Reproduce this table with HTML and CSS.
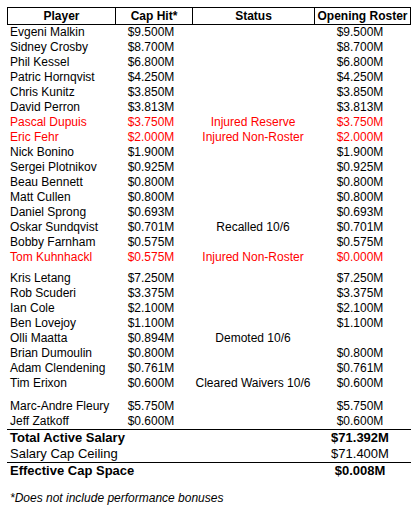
FILE: index.html
```html
<!DOCTYPE html>
<html>
<head>
<meta charset="utf-8">
<link rel="stylesheet" href="styles.css">
</head>
<body>
<div class="sheet">
  <div class="head">
    <div class="hc">Player</div>
    <div class="hc sep">Cap Hit*</div>
    <div class="hc sep">Status</div>
    <div class="hc sep">Opening Roster</div>
  </div>

  <div class="row"><div class="name">Evgeni Malkin</div><div class="val">$9.500M</div><div class="st"></div><div class="val">$9.500M</div></div>
  <div class="row"><div class="name">Sidney Crosby</div><div class="val">$8.700M</div><div class="st"></div><div class="val">$8.700M</div></div>
  <div class="row"><div class="name">Phil Kessel</div><div class="val">$6.800M</div><div class="st"></div><div class="val">$6.800M</div></div>
  <div class="row"><div class="name">Patric Hornqvist</div><div class="val">$4.250M</div><div class="st"></div><div class="val">$4.250M</div></div>
  <div class="row"><div class="name">Chris Kunitz</div><div class="val">$3.850M</div><div class="st"></div><div class="val">$3.850M</div></div>
  <div class="row"><div class="name">David Perron</div><div class="val">$3.813M</div><div class="st"></div><div class="val">$3.813M</div></div>
  <div class="row red"><div class="name">Pascal Dupuis</div><div class="val">$3.750M</div><div class="st">Injured Reserve</div><div class="val">$3.750M</div></div>
  <div class="row red"><div class="name">Eric Fehr</div><div class="val">$2.000M</div><div class="st">Injured Non-Roster</div><div class="val">$2.000M</div></div>
  <div class="row"><div class="name">Nick Bonino</div><div class="val">$1.900M</div><div class="st"></div><div class="val">$1.900M</div></div>
  <div class="row"><div class="name">Sergei Plotnikov</div><div class="val">$0.925M</div><div class="st"></div><div class="val">$0.925M</div></div>
  <div class="row"><div class="name">Beau Bennett</div><div class="val">$0.800M</div><div class="st"></div><div class="val">$0.800M</div></div>
  <div class="row"><div class="name">Matt Cullen</div><div class="val">$0.800M</div><div class="st"></div><div class="val">$0.800M</div></div>
  <div class="row"><div class="name">Daniel Sprong</div><div class="val">$0.693M</div><div class="st"></div><div class="val">$0.693M</div></div>
  <div class="row"><div class="name">Oskar Sundqvist</div><div class="val">$0.701M</div><div class="st">Recalled 10/6</div><div class="val">$0.701M</div></div>
  <div class="row"><div class="name">Bobby Farnham</div><div class="val">$0.575M</div><div class="st"></div><div class="val">$0.575M</div></div>
  <div class="row red"><div class="name">Tom Kuhnhackl</div><div class="val">$0.575M</div><div class="st">Injured Non-Roster</div><div class="val">$0.000M</div></div>

  <div class="gap"></div>

  <div class="row"><div class="name">Kris Letang</div><div class="val">$7.250M</div><div class="st"></div><div class="val">$7.250M</div></div>
  <div class="row"><div class="name">Rob Scuderi</div><div class="val">$3.375M</div><div class="st"></div><div class="val">$3.375M</div></div>
  <div class="row"><div class="name">Ian Cole</div><div class="val">$2.100M</div><div class="st"></div><div class="val">$2.100M</div></div>
  <div class="row"><div class="name">Ben Lovejoy</div><div class="val">$1.100M</div><div class="st"></div><div class="val">$1.100M</div></div>
  <div class="row"><div class="name">Olli Maatta</div><div class="val">$0.894M</div><div class="st">Demoted 10/6</div><div class="val"></div></div>
  <div class="row"><div class="name">Brian Dumoulin</div><div class="val">$0.800M</div><div class="st"></div><div class="val">$0.800M</div></div>
  <div class="row"><div class="name">Adam Clendening</div><div class="val">$0.761M</div><div class="st"></div><div class="val">$0.761M</div></div>
  <div class="row"><div class="name">Tim Erixon</div><div class="val">$0.600M</div><div class="st">Cleared Waivers 10/6</div><div class="val">$0.600M</div></div>

  <div class="gap gap-lg"></div>

  <div class="row"><div class="name">Marc-Andre Fleury</div><div class="val">$5.750M</div><div class="st"></div><div class="val">$5.750M</div></div>
  <div class="row"><div class="name">Jeff Zatkoff</div><div class="val">$0.600M</div><div class="st"></div><div class="val">$0.600M</div></div>

  <div class="sum sum-rule bold"><div class="name">Total Active Salary</div><div class="val">$71.392M</div></div>
  <div class="sum"><div class="name">Salary Cap Ceiling</div><div class="val">$71.400M</div></div>
  <div class="sum sum-rule bold"><div class="name">Effective Cap Space</div><div class="val">$0.008M</div></div>

  <p class="note">*Does not include performance bonuses</p>
</div>
</body>
</html>
```

FILE: styles.css
```css
html, body {
  margin: 0;
  padding: 0;
  background: #fff;
}

body {
  font-family: "Liberation Sans", Arial, Helvetica, sans-serif;
  font-size: 12px;
  color: #000;
}

.sheet {
  width: 404px;
  margin: 7px 0 0 7px;
}

.head {
  display: grid;
  grid-template-columns: 107px 77px 122px 96px;
  height: 18px;
  box-sizing: border-box;
  border: 1px solid #000;
  font-weight: bold;
  line-height: 16px;
}

.hc {
  text-align: center;
  white-space: nowrap;
}

.hc.sep {
  border-left: 1px solid #000;
}

.row {
  display: grid;
  grid-template-columns: 108px 77px 122px 97px;
  height: 15px;
  line-height: 15px;
  white-space: nowrap;
}

.row.red {
  color: #ff0000;
}

.name {
  padding-left: 3px;
}

.val {
  text-align: center;
  padding-right: 5px;
}

.st {
  text-align: center;
}

.gap {
  height: 6px;
}

.gap-lg {
  height: 8px;
}

.sum {
  display: grid;
  grid-template-columns: 307px 97px;
  height: 16px;
  line-height: 16px;
  font-size: 13px;
  white-space: nowrap;
}

.sum-rule {
  height: 17px;
  box-sizing: border-box;
  border-top: 1px solid #000;
}

.bold {
  font-weight: bold;
}

.note {
  margin: 12px 0 0 0;
  padding-left: 3px;
  font-style: italic;
  line-height: 15px;
}
```
